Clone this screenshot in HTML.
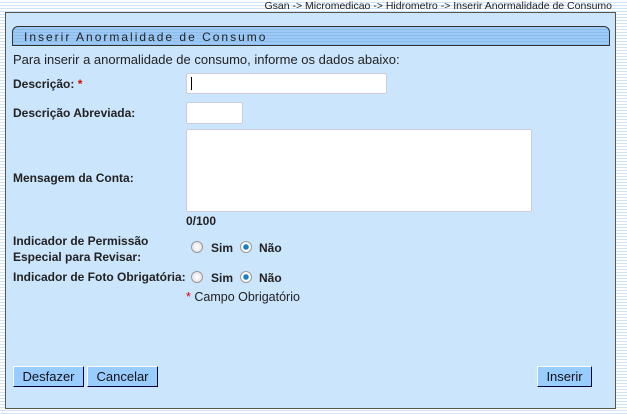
<!DOCTYPE html>
<html><head><meta charset="utf-8"><style>
*{margin:0;padding:0;box-sizing:border-box}
body{width:627px;height:414px;overflow:hidden;position:relative;font-family:"Liberation Sans",Arial,sans-serif;
background:repeating-linear-gradient(#fff 0 2px,#cfe3f6 2px 3px)}
.a{position:absolute}
.crumb{right:15px;top:0;font-size:10.5px;color:#222}
.panel{left:5px;top:12px;width:611px;height:397px;background:#cbe5fd;border:1px solid #555}
.title{left:12px;top:26px;width:598px;height:20px;border:1px solid #333;border-radius:6px 6px 0 0;
background:repeating-linear-gradient(#9cc9f5 0 2px,#8bbcec 2px 3px);font-size:12px;letter-spacing:2px;color:#222;padding:3px 0 0 11px}
.t{font-size:12px;color:#222}
.b{font-weight:bold}
.in{background:#fff;border:1px solid #ccd;border-radius:2px}
.rad{width:12px;height:12px;border-radius:50%;border:1px solid #999;background:radial-gradient(#fff,#ddd)}
.rad.on{background:radial-gradient(#1a7fc0 0 2.5px,#fff 3px)}
.btn{height:21px;background:#99ccff;border:1px solid;border-color:#fff #003 #003 #fff;font-size:13px;color:#111;text-align:center;line-height:19px}
</style></head><body>
<div class="a crumb">Gsan -&gt; Micromedicao -&gt; Hidrometro -&gt; Inserir Anormalidade de Consumo</div>
<div class="a panel"></div>
<div class="a title">Inserir Anormalidade de Consumo</div>
<div class="a t" style="left:13px;top:52px;font-size:13px">Para inserir a anormalidade de consumo, informe os dados abaixo:</div>
<div class="a t b" style="left:13px;top:77px">Descrição: <span style="color:#d00">*</span></div>
<div class="a in" style="left:186px;top:73px;width:201px;height:21px"><div style="position:absolute;left:4px;top:3px;width:1px;height:13px;background:#000"></div></div>
<div class="a t b" style="left:13px;top:106px">Descrição Abreviada:</div>
<div class="a in" style="left:186px;top:102px;width:57px;height:22px"></div>
<div class="a t b" style="left:13px;top:171px">Mensagem da Conta:</div>
<div class="a in" style="left:186px;top:129px;width:346px;height:83px"></div>
<div class="a t b" style="left:186px;top:214px">0/100</div>
<div class="a t b" style="left:13px;top:233px;line-height:16px">Indicador de Permissão<br>Especial para Revisar:</div>
<div class="a rad" style="left:191px;top:241px"></div>
<div class="a t b" style="left:211px;top:241px">Sim</div>
<div class="a rad on" style="left:240px;top:241px"></div>
<div class="a t b" style="left:259px;top:241px">Não</div>
<div class="a t b" style="left:13px;top:270px">Indicador de Foto Obrigatória:</div>
<div class="a rad" style="left:191px;top:271px"></div>
<div class="a t b" style="left:211px;top:271px">Sim</div>
<div class="a rad on" style="left:240px;top:271px"></div>
<div class="a t b" style="left:259px;top:271px">Não</div>
<div class="a t" style="left:186px;top:290px;font-size:12.5px"><span style="color:#d00">*</span> Campo Obrigatório</div>
<div class="a btn" style="left:13px;top:366px;width:71px">Desfazer</div>
<div class="a btn" style="left:87px;top:366px;width:71px">Cancelar</div>
<div class="a btn" style="left:537px;top:366px;width:55px">Inserir</div>
</body></html>
